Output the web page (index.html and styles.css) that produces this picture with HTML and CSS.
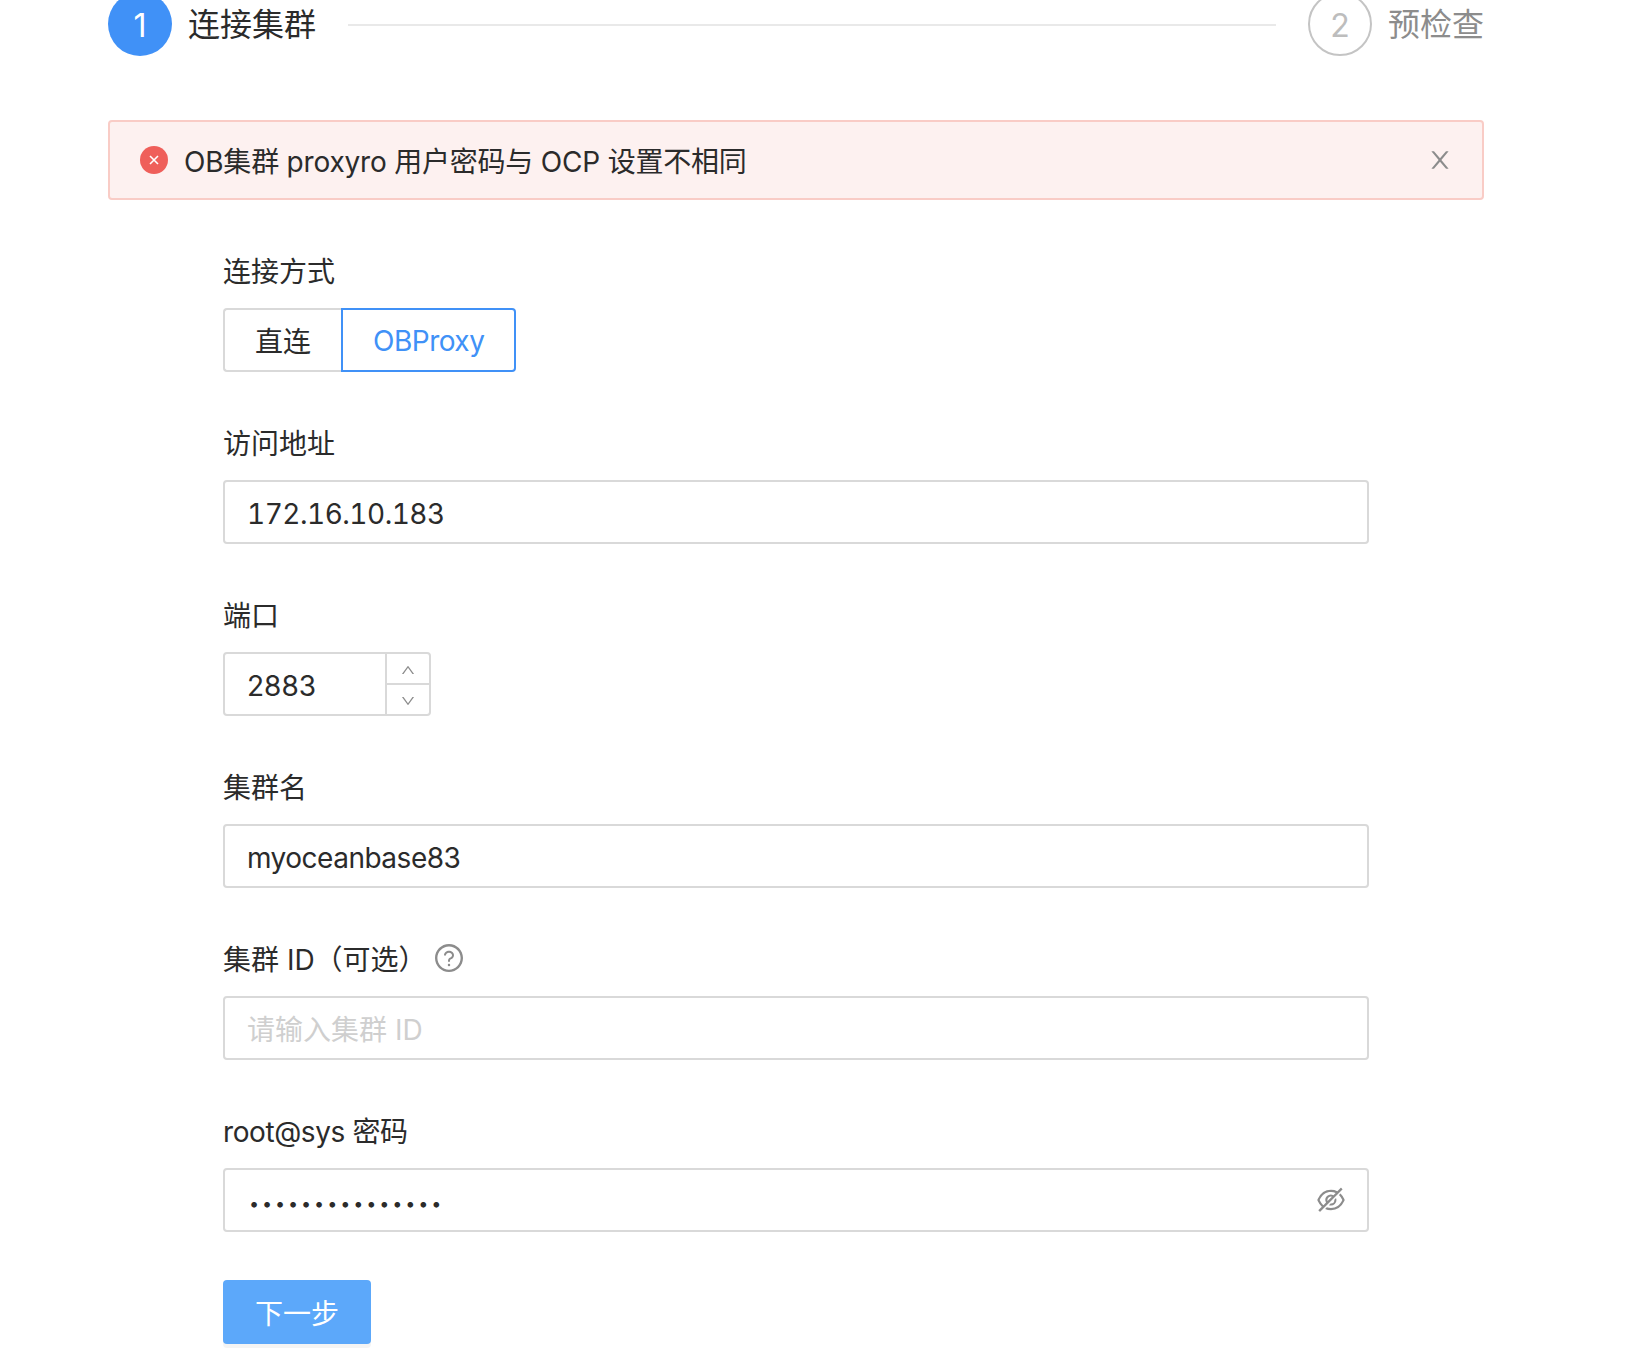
FILE: index.html
```html
<!DOCTYPE html>
<html lang="zh-CN">
<head>
  <meta charset="UTF-8">
  <meta name="viewport" content="width=device-width, initial-scale=1.0">
  <title>连接集群</title>
  <link rel="stylesheet" href="styles.css">
</head>
<body>
  <div class="page">
    <div class="steps">
      <div class="step step-active">
        <span class="step-num">1</span>
        <span class="step-title">连接集群</span>
      </div>
      <div class="step-line"></div>
      <div class="step step-wait">
        <span class="step-num">2</span>
        <span class="step-title">预检查</span>
      </div>
    </div>

    <div class="alert">
      <svg class="alert-icon" viewBox="0 0 28 28">
        <circle cx="14" cy="14" r="14" fill="#ef5f5a"/>
        <path d="M10 10l8 8M18 10l-8 8" stroke="#fff" stroke-width="1.6" fill="none"/>
      </svg>
      <span class="alert-text">OB集群 proxyro 用户密码与 OCP 设置不相同</span>
      <svg class="alert-close" viewBox="64 64 896 896" fill="currentColor">
        <path d="M563.8 512l262.5-312.9c4.4-5.2.7-13.1-6.1-13.1h-79.8c-4.7 0-9.2 2.1-12.3 5.7L511.6 449.8 295.1 191.7c-3-3.6-7.5-5.7-12.3-5.7H203c-6.8 0-10.5 7.9-6.1 13.1L459.4 512 196.9 824.9A7.95 7.95 0 0 0 203 838h79.8c4.7 0 9.2-2.1 12.3-5.7l216.5-258.1 216.5 258.1c3 3.6 7.5 5.7 12.3 5.7h79.8c6.8 0 10.5-7.9 6.1-13.1L563.8 512z"/>
      </svg>
    </div>

    <form class="form">
      <div class="form-item">
        <div class="form-label">连接方式</div>
        <div class="radio-group">
          <span class="radio-btn">直连</span>
          <span class="radio-btn radio-btn-checked">OBProxy</span>
        </div>
      </div>

      <div class="form-item">
        <div class="form-label">访问地址</div>
        <input class="input input-addr" type="text" value="172.16.10.183">
      </div>

      <div class="form-item">
        <div class="form-label">端口</div>
        <div class="input-number">
          <input class="input-number-field" type="text" value="2883">
          <div class="input-number-handlers">
            <span class="handler">
              <svg viewBox="64 64 896 896" fill="currentColor"><path d="M890.5 755.3L537.9 269.2c-12.8-17.6-39-17.6-51.7 0L133.5 755.3A8 8 0 0 0 140 768h75c5.1 0 9.9-2.5 12.9-6.6L512 369.8l284.1 391.6c3 4.1 7.8 6.6 12.9 6.6h75c6.5 0 10.3-7.4 5.5-12.7z"/></svg>
            </span>
            <span class="handler">
              <svg viewBox="64 64 896 896" fill="currentColor"><path d="M884 256h-75c-5.1 0-9.9 2.5-12.9 6.6L512 654.2 227.9 262.6c-3-4.1-7.8-6.6-12.9-6.6h-75c-6.5 0-10.3 7.4-6.5 12.7l352.6 486.1c12.8 17.6 39 17.6 51.7 0l352.6-486.1c3.9-5.3.1-12.7-6.4-12.7z"/></svg>
            </span>
          </div>
        </div>
      </div>

      <div class="form-item">
        <div class="form-label">集群名</div>
        <input class="input input-name" type="text" value="myoceanbase83">
      </div>

      <div class="form-item">
        <div class="form-label">
          集群 ID（可选）
          <svg class="help-icon" viewBox="64 64 896 896" fill="currentColor">
            <path d="M512 64C264.6 64 64 264.6 64 512s200.6 448 448 448 448-200.6 448-448S759.4 64 512 64zm0 820c-205.4 0-372-166.6-372-372s166.6-372 372-372 372 166.6 372 372-166.6 372-372 372z"/>
            <path d="M623.6 316.7C593.6 290.4 554 276 512 276s-81.6 14.5-111.6 40.7C369.2 344 352 380.7 352 420v7.6c0 4.4 3.6 8 8 8h48c4.4 0 8-3.6 8-8V420c0-44.1 43.1-80 96-80s96 35.9 96 80c0 31.1-22 59.6-56.1 72.7-21.2 8.1-39.2 22.3-52.1 40.9-13.1 19-19.9 41.8-19.9 64.9V620c0 4.4 3.6 8 8 8h48c4.4 0 8-3.6 8-8v-22.7a48.3 48.3 0 0 1 30.9-44.8c59-22.7 97.1-74.7 97.1-132.5.1-39.3-17.1-76-48.3-103.3z"/>
            <circle cx="512" cy="732" r="40"/>
          </svg>
        </div>
        <input class="input" type="text" placeholder="请输入集群 ID">
      </div>

      <div class="form-item">
        <div class="form-label form-label-latin">root@sys 密码</div>
        <div class="input-password">
          <input class="input-password-field" type="password" value="123456789012345">
          <svg class="eye-icon" viewBox="64 64 896 896" fill="currentColor">
            <path d="M942.2 486.2Q889.47 375.11 816.7 305l-50.88 50.88C807.31 395.53 843.45 447.4 874.7 512 791.5 684.2 673.4 766 512 766q-72.67 0-133.87-22.38L323 798.75Q408 838 512 838q288.3 0 430.2-300.3a60.29 60.29 0 0 0 0-51.5zm-63.57-320.64L836 122.88a8 8 0 0 0-11.32 0L715.31 232.2Q624.86 186 512 186q-288.3 0-430.2 300.3a60.3 60.3 0 0 0 0 51.5q56.69 119.4 136.5 191.41L112.48 835a8 8 0 0 0 0 11.31L155.17 889a8 8 0 0 0 11.31 0l712.15-712.12a8 8 0 0 0 0-11.32zM149.3 512C232.6 339.8 350.7 258 512 258c54.54 0 104.13 9.36 149.12 28.39l-70.3 70.3a176 176 0 0 0-238.13 238.13l-83.42 83.42C223.1 637.49 183.3 582.28 149.3 512zm246.7 0a112.11 112.11 0 0 1 146.2-106.69L401.31 546.2A112 112 0 0 1 396 512z"/>
            <path d="M508 624c-3.46 0-6.87-.16-10.25-.47l-52.82 52.82a176.09 176.09 0 0 0 227.42-227.42l-52.82 52.82c.31 3.38.47 6.79.47 10.25a111.94 111.94 0 0 1-112 112z"/>
          </svg>
        </div>
      </div>

      <button class="btn-primary" type="button">下一步</button>
    </form>
  </div>
</body>
</html>
```

FILE: styles.css
```css
html,body{
  margin : 0;
  height : 100%;
  overflow : hidden;
  background : #fff;
}
body{
  font-family : Inter, "Noto Sans CJK SC", sans-serif;
  font-size : 28px;
  color : #2b2b2b;
}
.page{
  width : 1376px;
  margin-left : 108px;
}

/* 步骤条 */
.steps{
  display : flex;
  align-items : center;
  gap : 32px;
  margin-top : -8px;
  height : 64px;
}
.step{
  display : flex;
  align-items : center;
  gap : 16px;
  flex : none;
}
.step-num{
  width : 64px;
  height : 64px;
  box-sizing : border-box;
  padding-top : 2px;
  border-radius : 50%;
  display : flex;
  align-items : center;
  justify-content : center;
  font-size : 32px;
}
.step-title{
  font-size : 32px;
  line-height : 64px;
  padding-top : 2px;
}
.step-line{
  flex : 1;
  height : 2px;
  margin-top : 2px;
  background : #e9e9e9;
}
.step-active .step-num{
  background : #4091f7;
  color : #fff;
}
.step-wait .step-num{
  border : 2px solid #c4c4c4;
  color : #bdbdbd;
}
.step-wait .step-title{
  color : #8c8c8c;
}

/* 错误提示 */
.alert{
  display : flex;
  align-items : center;
  height : 80px;
  box-sizing : border-box;
  margin-top : 64px;
  padding : 0 30px;
  border : 2px solid #f9ccc6;
  border-radius : 4px;
  background : #fdf1f0;
}
.alert-icon{
  width : 28px;
  height : 28px;
  flex : none;
  margin-right : 16px;
}
.alert-text{
  flex : 1;
  letter-spacing : -.2px;
}
.alert-close{
  width : 24px;
  height : 24px;
  color : #8c8c8c;
}

/* 表单 */
.form{
  width : 1146px;
  margin : 48px 0 0 115px;
}
.form-item{
  margin-bottom : 48px;
}
.form-label{
  display : flex;
  align-items : center;
  height : 44px;
  margin-bottom : 16px;
}
.form-label-latin{
  letter-spacing : -.4px;
}
.help-icon{
  width : 28px;
  height : 28px;
  margin-left : 8px;
  color : #8c8c8c;
}

.radio-group{
  display : flex;
}
.radio-btn{
  height : 64px;
  box-sizing : border-box;
  display : flex;
  align-items : center;
  padding : 0 30px;
  border : 2px solid #d9d9d9;
  border-right : 0;
  border-radius : 4px 0 0 4px;
}
.radio-btn-checked{
  padding-top : 2px;
  border : 2px solid #4091f7;
  border-radius : 0 4px 4px 0;
  color : #4091f7;
  letter-spacing : -.5px;
}

.input,.input-password{
  display : block;
  width : 100%;
  height : 64px;
  box-sizing : border-box;
  border : 2px solid #d9d9d9;
  border-radius : 4px;
  background : #fff;
}
.input,.input-number-field{
  padding : 3px 22px 0;
  font : inherit;
  color : inherit;
  outline : none;
}
.input-addr{
  font-variant-numeric : tabular-nums;
  letter-spacing : -.5px;
}
.input-name{
  letter-spacing : -.5px;
}
.input::placeholder{
  color : #cfcfcf;
  letter-spacing : 0;
}

.input-number{
  display : flex;
  width : 208px;
  height : 64px;
  box-sizing : border-box;
  border : 2px solid #d9d9d9;
  border-radius : 4px;
}
.input-number-field{
  flex : 1;
  min-width : 0;
  border : 0;
  background : none;
}
.input-number-handlers{
  display : flex;
  flex-direction : column;
  width : 42px;
  flex : none;
  border-left : 2px solid #d9d9d9;
}
.handler{
  flex : 1;
  display : flex;
  align-items : center;
  justify-content : center;
  color : #8c8c8c;
  padding-top : 3px;
}
.handler + .handler{
  border-top : 2px solid #d9d9d9;
}
.handler svg{
  width : 14px;
  height : 14px;
}

.input-password{
  display : flex;
  align-items : center;
  padding-right : 22px;
}
.input-password-field{
  flex : 1;
  min-width : 0;
  height : 100%;
  box-sizing : border-box;
  padding : 6px 24px 0;
  border : 0;
  background : none;
  font-family : inherit;
  font-size : 18px;
  letter-spacing : 2.9px;
  color : inherit;
  outline : none;
}
.eye-icon{
  width : 28px;
  height : 28px;
  color : #8c8c8c;
}

.btn-primary{
  display : block;
  width : 148px;
  height : 64px;
  padding : 0;
  border : 0;
  border-radius : 4px;
  background : #5ca8fa;
  box-shadow : 0 4px 0 rgba(0,0,0,.045);
  color : #fff;
  font : inherit;
}
```
